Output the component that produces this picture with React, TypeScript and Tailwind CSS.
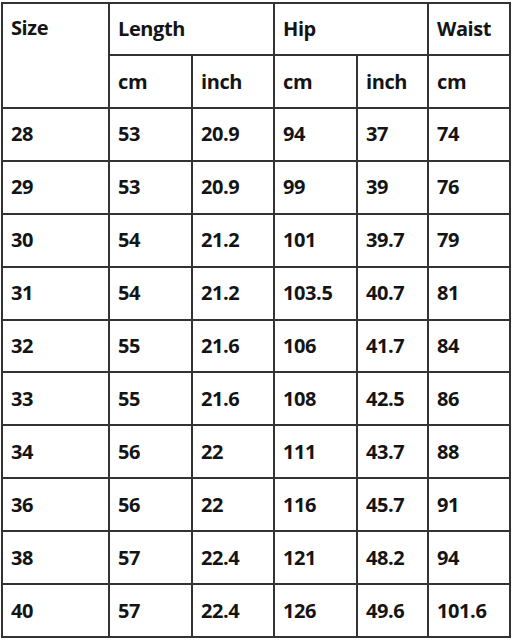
const rows: string[][] = [
  ["28", "53", "20.9", "94", "37", "74"],
  ["29", "53", "20.9", "99", "39", "76"],
  ["30", "54", "21.2", "101", "39.7", "79"],
  ["31", "54", "21.2", "103.5", "40.7", "81"],
  ["32", "55", "21.6", "106", "41.7", "84"],
  ["33", "55", "21.6", "108", "42.5", "86"],
  ["34", "56", "22", "111", "43.7", "88"],
  ["36", "56", "22", "116", "45.7", "91"],
  ["38", "57", "22.4", "121", "48.2", "94"],
  ["40", "57", "22.4", "126", "49.6", "101.6"],
];

const cell = "border-2 border-[#333] pl-[8px] align-middle";

export default function App() {
  return (
    <div className="w-[512px] h-[640px] bg-white pl-[1px] pt-[2px]">
      <table
        className="table-fixed border-collapse w-[508px] h-[636px] text-[20px] font-bold text-[#141414] leading-none tracking-[-0.4px]"
        style={{ fontFamily: "'Open Sans', Lato, sans-serif" }}
      >
        <colgroup>
          <col className="w-[107px]" />
          <col className="w-[83px]" />
          <col className="w-[82px]" />
          <col className="w-[83px]" />
          <col className="w-[71px]" />
          <col className="w-[82px]" />
        </colgroup>
        <tbody>
          <tr className="h-[52px]">
            <td className={`${cell} align-top pt-[14px]`} rowSpan={2}>Size</td>
            <td className={cell} colSpan={2}>Length</td>
            <td className={cell} colSpan={2}>Hip</td>
            <td className={cell}>Waist</td>
          </tr>
          <tr className="h-[53px]">
            <td className={cell}>cm</td>
            <td className={cell}>inch</td>
            <td className={cell}>cm</td>
            <td className={cell}>inch</td>
            <td className={cell}>cm</td>
          </tr>
          {rows.map((r) => (
            <tr key={r[0]} className="h-[52.9px]">
              {r.map((v, i) => (
                <td key={i} className={cell}>{v}</td>
              ))}
            </tr>
          ))}
        </tbody>
      </table>
    </div>
  );
}
